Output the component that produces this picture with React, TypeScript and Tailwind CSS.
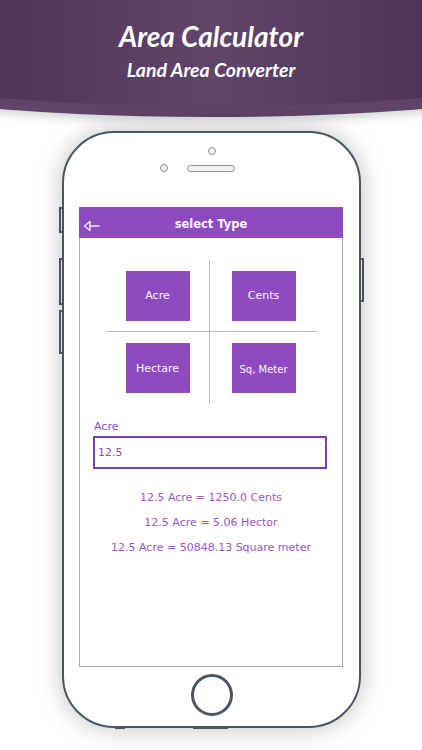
const phoneLine = "border-[#4a5665]";

function BackArrow() {
  return (
    <svg width="17" height="12" viewBox="0 0 17 12" fill="none" stroke="#f3e4fb" strokeWidth="1.4" strokeLinejoin="round" strokeLinecap="round">
      <path d="M7 1.5 L1.5 6 L7 10.5 Z" />
      <path d="M7 6 H16" />
    </svg>
  );
}

function TypeButton({ label, small }: { label: string; small?: boolean }) {
  return (
    <div className="flex h-[50px] w-[64px] items-center justify-center bg-[#8e4bc0] pt-[2px]">
      <span className={`${small ? "text-[10px]" : "text-[11px]"} text-[#fbf3ff]`}>{label}</span>
    </div>
  );
}

export default function App() {
  const results = [
    "12.5 Acre = 1250.0 Cents",
    "12.5 Acre = 5.06 Hector",
    "12.5 Acre = 50848.13 Square meter",
  ];

  return (
    <div className="relative h-[750px] w-[422px] overflow-hidden bg-white">
      {/* banner, wider than the page so the curve stays shallow */}
      <div className="-ml-[139px] h-[117px] w-[700px] rounded-b-[50%_40px] bg-[#5d4468] shadow-[0_4px_10px_rgba(0,0,0,0.18)]">
        <div className="h-[106px] rounded-b-[50%_40px] bg-[linear-gradient(90deg,#4a3153,#4f3558_20%,#5f4569_50%,#4f3558_80%,#4a3153)] text-center text-white italic font-bold [font-family:Lato,'Open_Sans',sans-serif]">
          <p className="pt-[20px] text-[28px] leading-[32px]">Area Calculator</p>
          <p className="mt-[6px] text-[19.5px] leading-[23px]">Land Area Converter</p>
        </div>
      </div>

      {/* phone */}
      <div className={`relative ml-[62px] mt-[14px] flex h-[597px] w-[299px] flex-col rounded-[52px] border-2 ${phoneLine} bg-white shadow-[0_0_26px_rgba(0,0,0,0.25)]`}>
        <div className={`absolute left-[-5px] top-[74px] h-[26px] w-[3px] border-y-2 border-l-2 ${phoneLine}`} />
        <div className={`absolute left-[-5px] top-[125px] h-[47px] w-[3px] border-y-2 border-l-2 ${phoneLine}`} />
        <div className={`absolute left-[-5px] top-[177px] h-[44px] w-[3px] border-y-2 border-l-2 ${phoneLine}`} />
        <div className={`absolute right-[-5px] top-[125px] h-[44px] w-[3px] border-y-2 border-r-2 ${phoneLine}`} />
        <div className="absolute bottom-[-3px] left-[51px] h-[3px] w-[10px] rounded-t bg-[#4a5665]" />
        <div className="absolute bottom-[-3px] left-[129px] h-[3px] w-[35px] rounded-t bg-[#4a5665]" />

        <div className="ml-[144px] mt-[14px] h-2 w-2 rounded-full border border-[#8c9198] bg-[#f1f1f1]" />
        <div className="mt-[9px] flex items-center">
          <div className="ml-[96px] h-2 w-2 rounded-full border border-[#8c9198] bg-[#f1f1f1]" />
          <div className="ml-[19px] h-[7px] w-[48px] rounded-full border border-[#8c9198] bg-[#f1f1f1]" />
        </div>

        {/* screen */}
        <div className="ml-[15px] mt-[35px] flex h-[460px] w-[264px] flex-col [font-family:'DejaVu_Sans',Verdana,sans-serif]">
          <div className="relative flex h-[31px] items-center justify-center bg-[#8e4bc0] pt-[4px]">
            <div className="absolute left-[4px] top-[13px] flex">
              <BackArrow />
            </div>
            <span className="text-[11.5px] font-bold text-[#fbf3ff]">select Type</span>
          </div>

          <div className="flex flex-1 flex-col border-x border-b border-[#a6a9ad]">
            <div className="ml-[26px] mt-[22px] grid h-[144px] w-[211px] grid-cols-[104px_107px] grid-rows-[72px_72px]">
              <div className="flex items-center justify-center border-b border-r border-[#bdbdbd]">
                <TypeButton label="Acre" />
              </div>
              <div className="flex items-center justify-center border-b border-[#bdbdbd]">
                <TypeButton label="Cents" />
              </div>
              <div className="flex items-center justify-center border-r border-[#bdbdbd]">
                <TypeButton label="Hectare" />
              </div>
              <div className="flex items-center justify-center">
                <TypeButton label="Sq, Meter" small />
              </div>
            </div>

            <p className="ml-[14px] mt-[16px] text-[11px] leading-[14px] text-[#8e4bc0]">Acre</p>
            <div className="ml-[13px] mt-[2px] flex h-[33px] w-[234px] items-center border-2 border-[#7d3fb0] pl-[3px] pt-[1px]">
              <span className="text-[11px] text-[#8e4bc0]">12.5</span>
            </div>

            <div className="mt-[16px] flex flex-col items-center text-[11px] leading-[25px] text-[#9b56c9]">
              {results.map((r) => (
                <p key={r}>{r}</p>
              ))}
            </div>
          </div>
        </div>

        {/* home button */}
        <div className={`mx-auto mt-[7px] h-[42px] w-[42px] rounded-full border-[3px] ${phoneLine}`} />
      </div>
    </div>
  );
}
